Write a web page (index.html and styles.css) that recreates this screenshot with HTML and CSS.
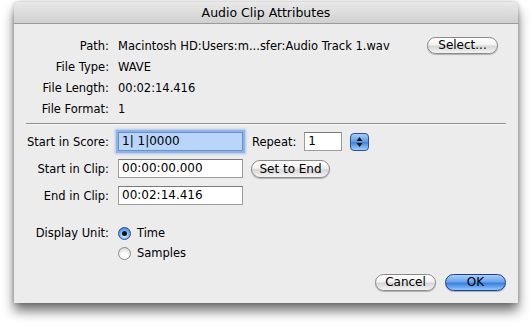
FILE: index.html
```html
<!DOCTYPE html>
<html>
<head>
<meta charset="utf-8">
<link rel="stylesheet" href="styles.css">
</head>
<body>
<div class="window">
  <div class="titlebar">Audio Clip Attributes</div>
  <div class="content">
    <div class="info">
      <div class="label">Path:</div>
      <div class="value">Macintosh HD:Users:m...sfer:Audio Track 1.wav</div>
      <div class="btn select">Select...</div>
      <div class="label">File Type:</div>
      <div class="value span2">WAVE</div>
      <div class="label">File Length:</div>
      <div class="value span2">00:02:14.416</div>
      <div class="label">File Format:</div>
      <div class="value span2">1</div>
    </div>
    <div class="sep"></div>
    <div class="form">
      <div class="frow">
        <div class="label">Start in Score:</div>
        <div class="field focus"><span class="sel">1| 1|0000</span></div>
        <div class="inl">Repeat:</div>
        <div class="field small">1</div>
        <div class="stepper">
          <svg width="7" height="12" viewBox="0 0 7 12"><path d="M3.5 1 L6.5 5 L0.5 5 Z M3.5 11 L6.5 7 L0.5 7 Z" fill="#111"/></svg>
        </div>
      </div>
      <div class="frow">
        <div class="label">Start in Clip:</div>
        <div class="field">00:00:00.000</div>
        <div class="btn setend">Set to End</div>
      </div>
      <div class="frow">
        <div class="label">End in Clip:</div>
        <div class="field">00:02:14.416</div>
      </div>
    </div>
    <div class="units">
      <div class="urow">
        <div class="label">Display Unit:</div>
        <div class="radio on"><span class="dot"></span></div>
        <div class="rtext">Time</div>
      </div>
      <div class="urow">
        <div class="label"></div>
        <div class="radio"></div>
        <div class="rtext">Samples</div>
      </div>
    </div>
    <div class="buttons">
      <div class="btn cancel">Cancel</div>
      <div class="btn ok">OK</div>
    </div>
  </div>
</div>
</body>
</html>
```

FILE: styles.css
```css
html, body {
  margin: 0;
  padding: 0;
  background: #ffffff;
}
body {
  font-family: "DejaVu Sans", "Liberation Sans", sans-serif;
  font-size: 11.5px;
  color: #000;
  padding: 2px 0 0 14px;
  height: 326px;
  box-sizing: border-box;
  overflow: hidden;
}
.window {
  width: 504px;
  height: 301px;
  background: #ececec;
  box-shadow: 0 8px 12px rgba(0,0,0,0.55), 0 0 4px rgba(0,0,0,0.25);
  border-radius: 5px 5px 0 0;
  display: flex;
  flex-direction: column;
}
.titlebar {
  height: 21px;
  line-height: 21px;
  text-align: center;
  font-size: 12.5px;
  background: linear-gradient(#e9e9e9, #d0d0d0);
  border-bottom: 1px solid #9a9a9a;
  border-radius: 5px 5px 0 0;
}
.content {
  padding: 11px 12px 12px 0;
  display: flex;
  flex-direction: column;
}
.label {
  text-align: right;
  width: 95px;
  flex: none;
}
.info {
  display: grid;
  grid-template-columns: 95px 1fr auto;
  grid-auto-rows: 21px;
  column-gap: 9px;
  align-items: center;
}
.span2 { grid-column: span 2; }
.btn {
  box-sizing: border-box;
  height: 17px;
  line-height: 15px;
  text-align: center;
  border: 1px solid #8a8a8a;
  border-radius: 9px;
  background: linear-gradient(#ffffff 0%, #f2f2f2 45%, #d6d6d6 55%, #f4f4f4 100%);
  box-shadow: 0 1px 1px rgba(0,0,0,0.25);
  font-size: 12px;
}
.select {
  width: 71px;
  margin-right: 8px;
}
.sep {
  margin: 4px 0 0 12px;
  height: 1px;
  background: #8f8f8f;
  border-bottom: 1px solid #f8f8f8;
}
.form {
  margin-top: 7px;
  display: flex;
  flex-direction: column;
  gap: 8px;
}
.frow {
  display: flex;
  align-items: center;
  height: 19px;
}
.frow .label { margin-right: 9px; }
.field {
  box-sizing: border-box;
  width: 125px;
  height: 19px;
  line-height: 17px;
  padding-left: 3px;
  background: #fff;
  border: 1px solid #9c9c9c;
  border-top-color: #7a7a7a;
  font-size: 12px;
  flex: none;
}
.field.focus {
  background: #b9d5fb;
  border-color: #6d8fc4;
  box-shadow: 0 0 0 2px #8db3ea, 0 0 2px 3px rgba(110,160,230,0.5);
}
.sel { background: transparent; }
.inl { margin-left: 9px; margin-right: 8px; }
.field.small { width: 38px; }
.stepper {
  box-sizing: border-box;
  margin-left: 8px;
  width: 19px;
  height: 18px;
  border-radius: 4px;
  border: 1px solid #2f4f8f;
  background: linear-gradient(#a6cdf5 0%, #5f9ce6 48%, #3f82dc 52%, #9fd0ff 100%);
  display: flex;
  align-items: center;
  justify-content: center;
}
.setend {
  width: 79px;
  margin-left: 8px;
  height: 18px;
  line-height: 16px;
}
.units {
  margin-top: 18px;
  display: flex;
  flex-direction: column;
}
.urow {
  display: flex;
  align-items: center;
  height: 20px;
}
.urow .label { margin-right: 9px; }
.radio {
  box-sizing: border-box;
  width: 13px;
  height: 13px;
  border-radius: 50%;
  border: 1px solid #8a8a8a;
  background: radial-gradient(circle at 50% 70%, #ffffff 30%, #d8d8d8 80%);
  display: flex;
  align-items: center;
  justify-content: center;
}
.radio.on {
  border-color: #2a4c8c;
  background: radial-gradient(circle at 50% 65%, #b8e0ff 20%, #4a8ee0 75%, #2c64c0 100%);
}
.dot {
  width: 5px;
  height: 5px;
  border-radius: 50%;
  background: #111;
}
.rtext { margin-left: 6px; }
.buttons {
  margin-top: 11px;
  display: flex;
  justify-content: flex-end;
  gap: 9px;
}
.cancel, .ok {
  width: 61px;
}
.ok {
  border-color: #1e3f8c;
  background: linear-gradient(#a9cdf6 0%, #6aa5ec 45%, #3b7fe0 55%, #8cc6ff 100%);
}
```
